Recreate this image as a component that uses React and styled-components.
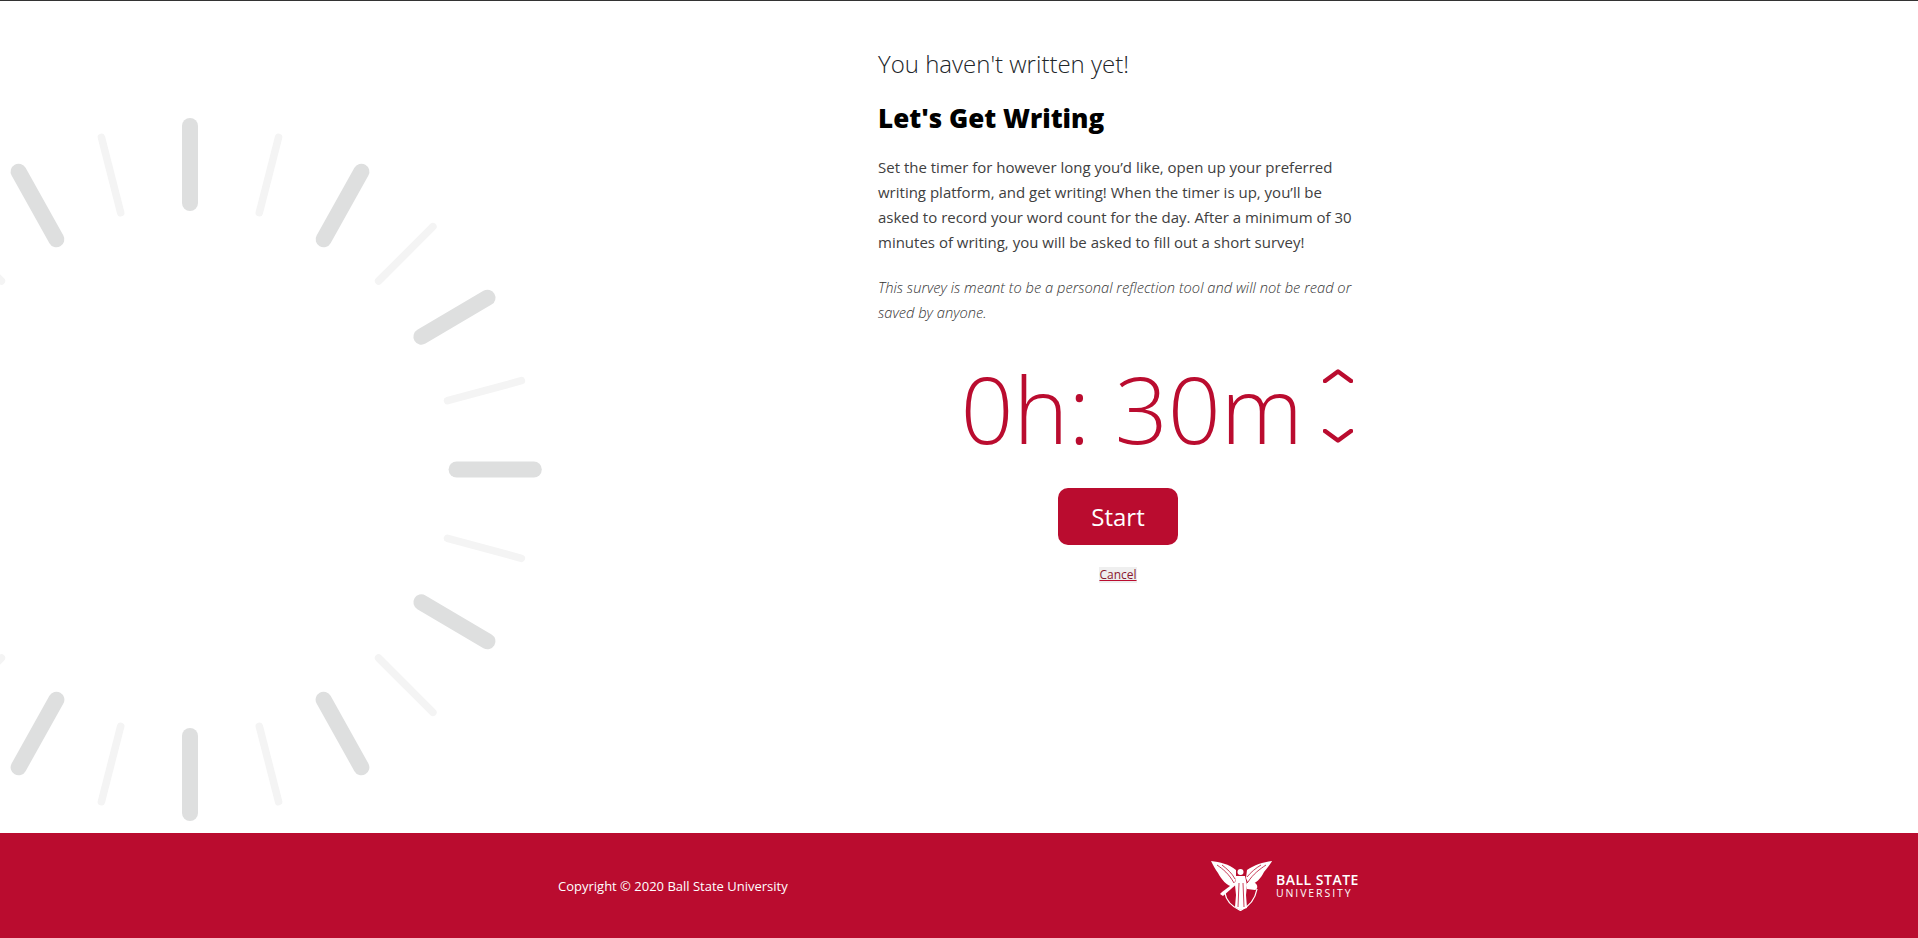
import React from 'react';
import styled, { createGlobalStyle } from 'styled-components';

const GlobalStyle = createGlobalStyle`
  html, body { margin: 0; padding: 0; background: #fff; }
  body { font-family: "Open Sans", "Liberation Sans", sans-serif; }
`;

const Page = styled.div`
  width: 1918px;
  height: 938px;
  display: flex;
  flex-direction: column;
  overflow: hidden;
  border-top: 1px solid #333;
  box-sizing: border-box;
`;

const Main = styled.main`
  flex: 1;
  display: flex;
  min-height: 0;
`;

const DialColumn = styled.div`
  width: 878px;
  flex: none;
`;

const Dial = styled.svg`
  display: block;
`;

const Content = styled.section`
  width: 480px;
  padding-top: 46px;
  display: flex;
  flex-direction: column;
`;

const Subtitle = styled.h2`
  margin: 0;
  font-size: 24px;
  line-height: 33px;
  font-weight: 300;
  color: #212529;
`;

const Title = styled.h1`
  margin: 20px 0 0;
  font-size: 26px;
  line-height: 36px;
  font-weight: 800;
  color: #000;
`;

const Body = styled.p`
  margin: 19px 0 0;
  font-size: 15px;
  line-height: 25px;
  color: #404040;
`;

const Note = styled.p`
  margin: 20px 0 0;
  font-size: 14.7px;
  line-height: 25px;
  font-weight: 300;
  font-style: italic;
  color: #333;
`;

const TimerRow = styled.div`
  margin-top: 20px;
  padding-right: 5px;
  display: flex;
  justify-content: flex-end;
  align-items: center;
  gap: 20px;
`;

const TimerText = styled.div`
  font-size: 93px;
  line-height: 127px;
  font-weight: 300;
  color: #ba0c2f;
  white-space: nowrap;
`;

const Arrows = styled.div`
  display: flex;
  flex-direction: column;
  gap: 46px;
  margin-bottom: 5px;
`;

const Arrow = styled.svg`
  display: block;
  width: 30px;
  height: 14px;
`;

const Actions = styled.div`
  margin-top: 16px;
  display: flex;
  flex-direction: column;
  align-items: center;
`;

const StartButton = styled.button`
  width: 120px;
  height: 57px;
  border: none;
  border-radius: 10px;
  background: #ba0c2f;
  color: #fff;
  font-family: inherit;
  font-size: 24px;
  padding: 0;
`;

const CancelLink = styled.a`
  margin-top: 22px;
  font-size: 12px;
  line-height: 16px;
  color: #8a1a30;
  background: #efefef;
  text-decoration: underline;
  text-decoration-color: #ba0c2f;
`;

const Footer = styled.footer`
  flex: none;
  height: 105px;
  background: #ba0c2f;
  display: flex;
  align-items: center;
  padding-left: 558px;
`;

const Copyright = styled.div`
  width: 653px;
  font-size: 13px;
  color: #fff;
`;

const Logo = styled.div`
  display: flex;
  align-items: center;
  gap: 4px;
  color: #fff;
`;

const LogoText = styled.div`
  display: flex;
  flex-direction: column;
  padding-top: 2px;
`;

const LogoTop = styled.span`
  font-size: 14px;
  line-height: 14px;
  font-weight: 600;
  letter-spacing: 0.5px;
`;

const LogoBottom = styled.span`
  font-size: 10.5px;
  line-height: 13px;
  letter-spacing: 1.9px;
`;

// dial ticks as [x1, y1, x2, y2], the lower half mirrors the upper one
const thickTicks = [
  [190, 126, 190, 203],
  [361.4, 171.7, 323.6, 239.3],
  [487.5, 297.7, 421.4, 336.7],
  [456.6, 469.5, 533.8, 469.5],
  [421.4, 602.3, 487.5, 641.3],
  [323.6, 699.7, 361.4, 767.3],
  [190, 736, 190, 813],
  [56.4, 699.7, 18.6, 767.3],
  [56.4, 239.3, 18.6, 171.7],
];

const thinTicks = [
  [278.6, 137.3, 259.3, 212.7],
  [432.9, 226.7, 378.6, 281],
  [521.4, 380.7, 447.5, 400.7],
  [447.5, 538.3, 521.4, 558.3],
  [378.6, 658, 432.9, 712.3],
  [259.3, 726.3, 278.6, 801.7],
  [120.7, 726.3, 101.4, 801.7],
  [1.4, 658, -52.9, 712.3],
  [1.4, 281, -52.9, 226.7],
  [120.7, 212.7, 101.4, 137.3],
];

const App = () => (
  <>
    <GlobalStyle />
    <Page>
      <Main>
        <DialColumn>
          <Dial width="560" height="832" viewBox="0 1 560 832">
            {thinTicks.map((t, i) => (
              <line key={i} x1={t[0]} y1={t[1]} x2={t[2]} y2={t[3]} stroke="#f4f4f4" strokeWidth="7.5" strokeLinecap="round" />
            ))}
            {thickTicks.map((t, i) => (
              <line key={i} x1={t[0]} y1={t[1]} x2={t[2]} y2={t[3]} stroke="#dedfdf" strokeWidth="16" strokeLinecap="round" />
            ))}
          </Dial>
        </DialColumn>
        <Content>
          <Subtitle>You haven't written yet!</Subtitle>
          <Title>Let's Get Writing</Title>
          <Body>
            Set the timer for however long you’d like, open up your preferred writing platform, and get
            writing! When the timer is up, you’ll be asked to record your word count for the day. After a
            minimum of 30 minutes of writing, you will be asked to fill out a short survey!
          </Body>
          <Note>
            This survey is meant to be a personal reflection tool and will not be read or saved by anyone.
          </Note>
          <TimerRow>
            <TimerText>0h: 30m</TimerText>
            <Arrows>
              <Arrow viewBox="0 0 30 14">
                <path d="M2 12 L15 2.5 L28 12" fill="none" stroke="#ba0c2f" strokeWidth="4.5" strokeLinecap="round" strokeLinejoin="round" />
              </Arrow>
              <Arrow viewBox="0 0 30 14">
                <path d="M2 2 L15 11.5 L28 2" fill="none" stroke="#ba0c2f" strokeWidth="4.5" strokeLinecap="round" strokeLinejoin="round" />
              </Arrow>
            </Arrows>
          </TimerRow>
          <Actions>
            <StartButton>Start</StartButton>
            <CancelLink href="#">Cancel</CancelLink>
          </Actions>
        </Content>
      </Main>
      <Footer>
        <Copyright>Copyright © 2020 Ball State University</Copyright>
        <Logo>
          <svg width="61" height="50" viewBox="0 0 61 50">
            <g fill="#fff">
              <path d="M0 0 C9 1 18 3 25 9 L25 17 L22 26 C16 25 10 18 7 12 C4 8 2 4 0 0 Z" />
              <path d="M61 0 C52 1 43 4 36 9 L35 17 L38 24 C45 23 50 17 53 11 C56 7 59 4 61 0 Z" />
              <circle cx="29.5" cy="11" r="3" />
              <path d="M25 15 L34 15 L36 24 L35 34 L36 47 L29 49 L24 46 L25 34 L24 24 Z" />
              <path d="M9 33 L11 31 L27 19 L28 21 L12 35 Z" />
              <path d="M36 22 L44 22 C47 24 47 28 44 29 L36 28 Z" />
            </g>
            <g fill="none" stroke="#ba0c2f" strokeWidth="0.8">
              <path d="M6 4 C12 8 18 13 23 22" />
              <path d="M11 4 C16 8 21 12 24 18" />
              <path d="M55 4 C49 8 42 13 37 21" />
              <path d="M50 4 C45 7 40 11 36 16" />
              <path d="M28 22 L27 46" />
              <path d="M32 22 L33 46" />
            </g>
            <path d="M14 32 C15 40 22 46 29.5 49.5 C37 46 44 39 46 28" fill="none" stroke="#fff" strokeWidth="1.3" />
          </svg>
          <LogoText>
            <LogoTop>BALL STATE</LogoTop>
            <LogoBottom>UNIVERSITY</LogoBottom>
          </LogoText>
        </Logo>
      </Footer>
    </Page>
  </>
);

export default App;
